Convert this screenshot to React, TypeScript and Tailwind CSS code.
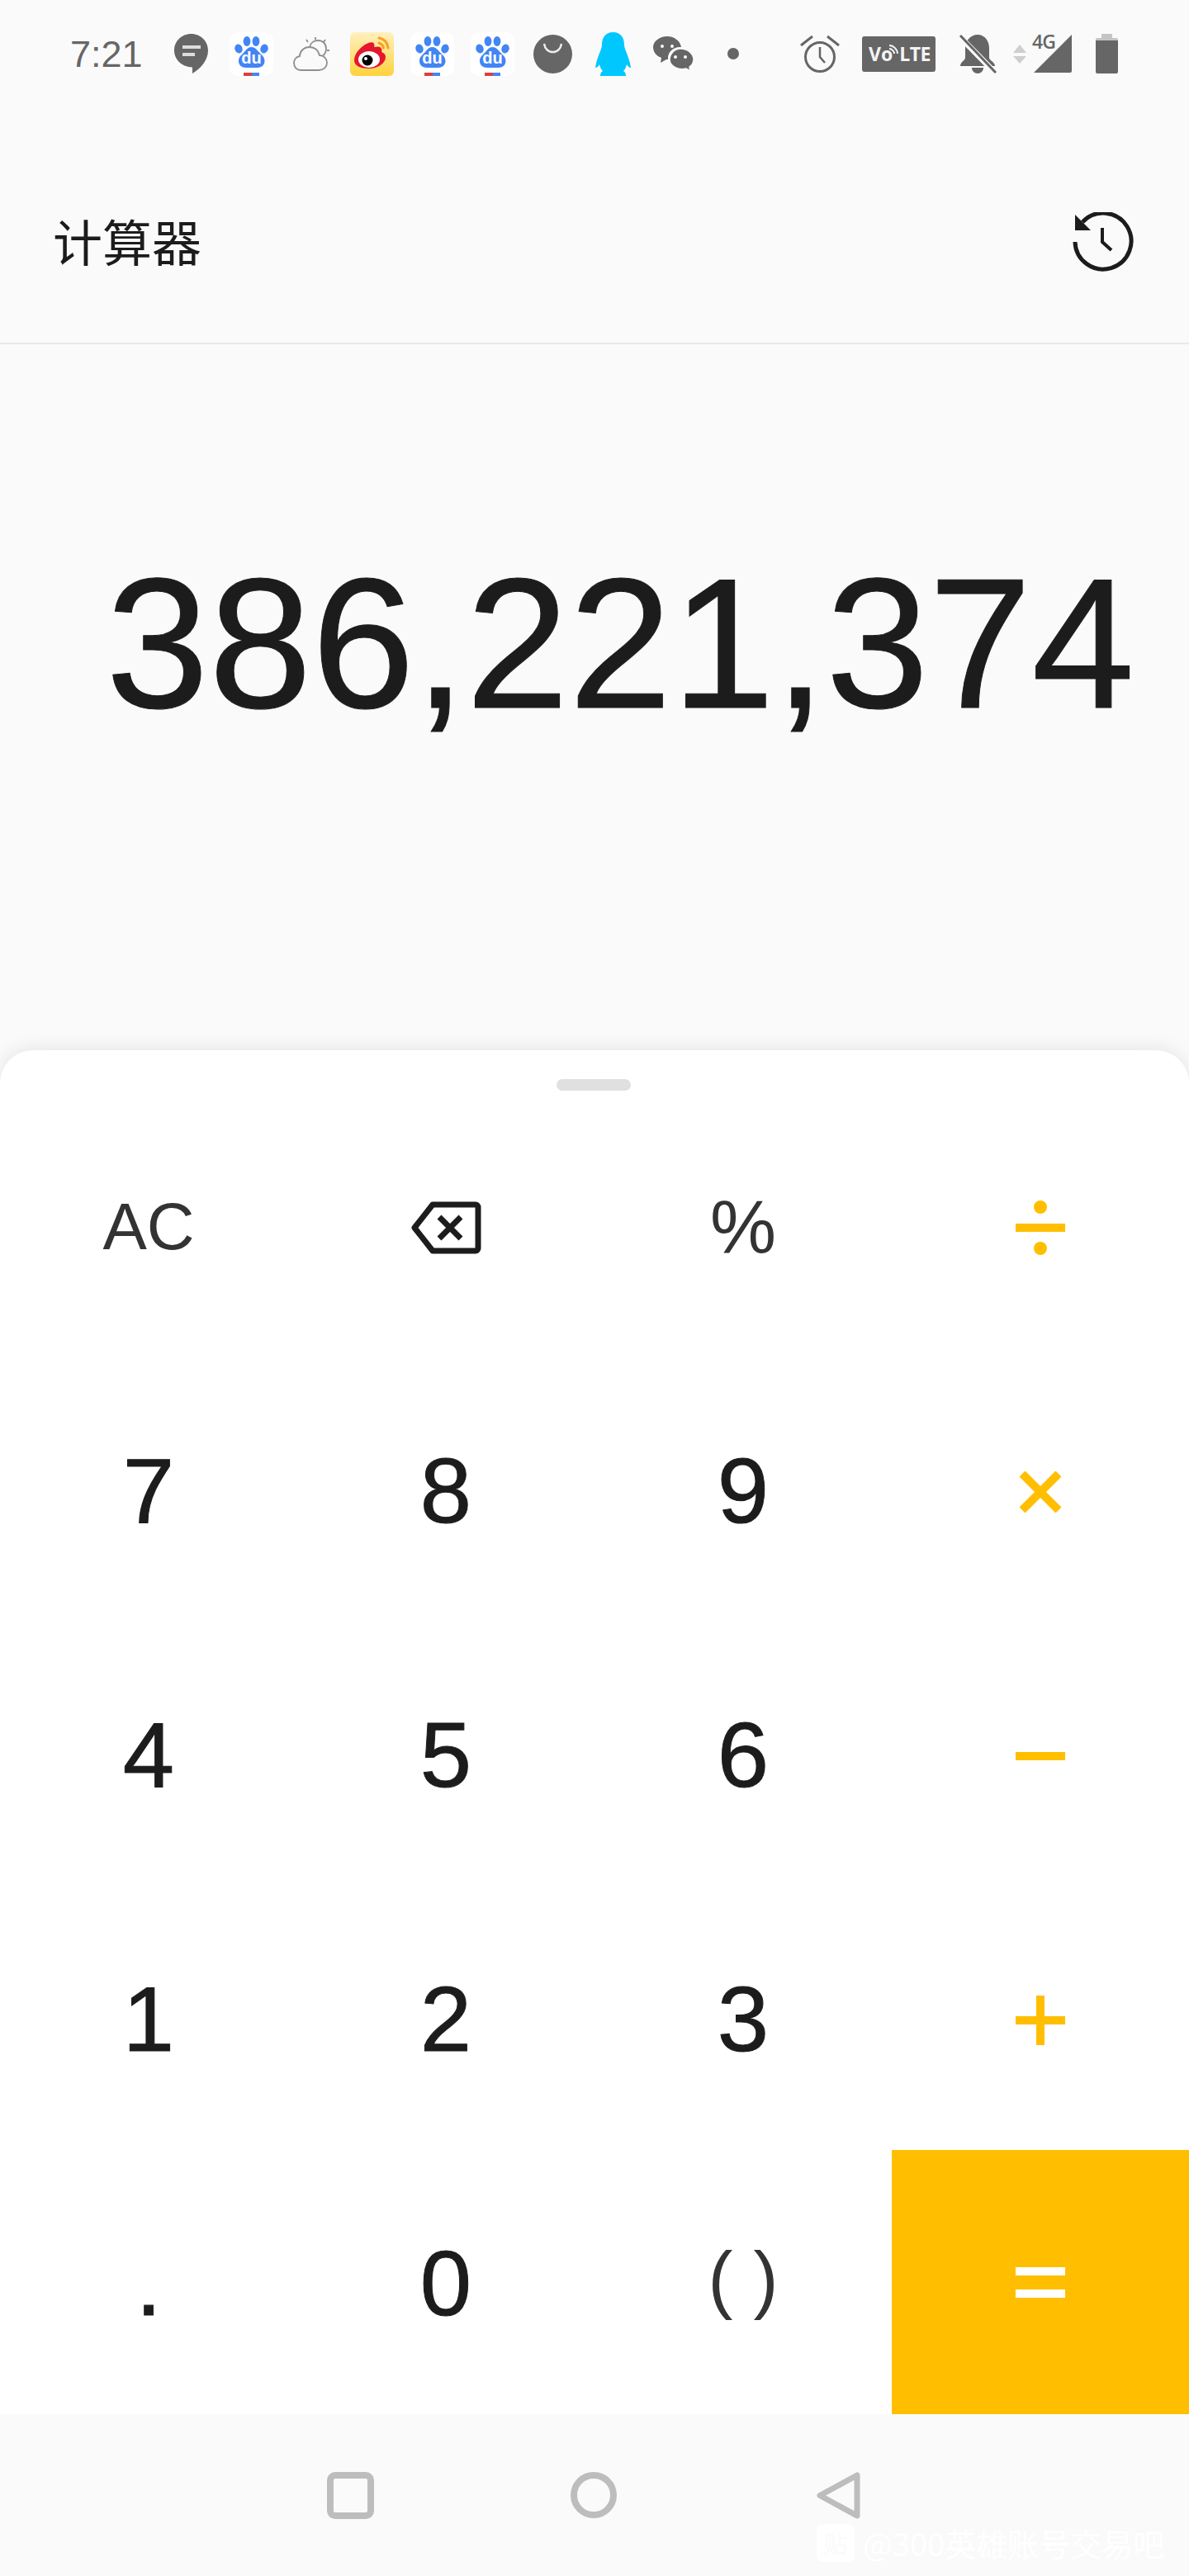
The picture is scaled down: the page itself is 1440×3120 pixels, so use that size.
const sans = "font-['Liberation_Sans',Arial,sans-serif]";

function BaiduIcon({ className }: { className: string }) {
  return (
    <svg viewBox="0 0 53 53" className={className}>
      <rect width="53" height="53" rx="10" fill="#fff" />
      <g fill="#4285f4">
        <ellipse cx="11" cy="20" rx="4.6" ry="5.6" transform="rotate(-20 11 20)" />
        <ellipse cx="21" cy="11" rx="4.4" ry="6" />
        <ellipse cx="32" cy="11" rx="4.4" ry="6" />
        <ellipse cx="42" cy="20" rx="4.6" ry="5.6" transform="rotate(20 42 20)" />
        <path d="M26.5 18c5 0 7 4 10 7 3 3 6 5 6 10 0 5-4 8-9 8H20c-5 0-9-3-9-8 0-5 3-7 6-10 3-3 4.500-7 9.500-7z" />
      </g>
      <text x="26.500" y="38" textAnchor="middle" fill="#fff" fontSize="20" fontWeight="700" fontFamily="Liberation Sans, sans-serif">du</text>
      <rect x="17" y="49" width="10" height="4" fill="#d9413d" />
      <rect x="27" y="49" width="9" height="4" fill="#4285f4" />
    </svg>
  );
}

function WeiboIcon() {
  return (
    <svg viewBox="0 0 53 53" className="ml-[24px] h-[53px] w-[53px]">
      <defs>
        <linearGradient id="wb" x1="0" y1="0" x2="0" y2="1">
          <stop offset="0" stopColor="#fff0c0" />
          <stop offset="1" stopColor="#ffd23c" />
        </linearGradient>
      </defs>
      <rect width="53" height="53" rx="6" fill="url(#wb)" />
      <path d="M5 34c0-8 7-15 13-19 5-3 10-4 11-1 1 2 0 4 0 4 4-1 8-1 9 2 1 2 0 4 0 4 3 1 5 3 5 6 0 8-10 14-20 14S5 41 5 34z" fill="#e6162d" />
      <ellipse cx="23" cy="33" rx="13" ry="10" fill="#fff" />
      <circle cx="21" cy="34" r="6.500" fill="#000" />
      <circle cx="19" cy="32" r="2" fill="#fff" />
      <path d="M35 7c6 1 10 5 11 12M35 13c3 1 5 3 5.500 6" fill="none" stroke="#f7a21c" strokeWidth="3" strokeLinecap="round" />
    </svg>
  );
}

function StatusBar() {
  return (
    <div className={`flex h-[130px] items-center pl-[85px] ${sans}`}>
      <span className="w-[90px] pt-[1px] text-[45px] leading-none text-[#666]">7:21</span>
      {/* message bubble */}
      <svg viewBox="0 0 41 48" className="ml-[36px] h-[48px] w-[41px]">
        <path d="M20.500 0C32 0 41 9 41 20c0 12-9 22-19 28v-7.500C9 40 0 31 0 20 0 9 9 0 20.500 0z" fill="#666" />
        <rect x="10" y="14" width="22" height="4" fill="#ddd" />
        <rect x="10" y="23" width="15" height="4" fill="#ddd" />
      </svg>
      <BaiduIcon className="ml-[26px] h-[53px] w-[53px]" />
      {/* weather */}
      <svg viewBox="0 0 45 41" className="ml-[24px] h-[41px] w-[45px]" fill="none" stroke="#8f8f8f" strokeWidth="1.800">
        <path d="M9 40h22c6 0 10-4 10-9 0-5-4-9-9-9-1-6-6-10-12-10-7 0-12 5-12 11-5 1-7 5-7 8 0 5 3 9 8 9z" />
        <path d="M20 12c1-5 5-8 10-8 6 0 10 4 10 10 0 4-2 7-4 9" />
        <path d="M27 0v3M16 3l2 3M39 3l-2 3M44 16h-3" />
      </svg>
      <WeiboIcon />
      <BaiduIcon className="ml-[20px] h-[53px] w-[53px]" />
      <BaiduIcon className="ml-[20px] h-[53px] w-[53px]" />
      {/* bag */}
      <svg viewBox="0 0 47 47" className="ml-[23px] h-[47px] w-[47px]">
        <circle cx="23.500" cy="23.500" r="23.500" fill="#666" />
        <path d="M13 11c1 6 5 10 10.500 10S33 17 34 11" fill="none" stroke="#eee" strokeWidth="2.500" />
      </svg>
      {/* qq */}
      <svg viewBox="0 0 43 53" className="ml-[28px] h-[53px] w-[43px]">
        <path d="M21.500 0C31 0 35 7 35 15c0 3 1 5 2 8 2 5 5 12 6 20-2 0-4-2-5-4-1 4-2 6-4 8 2 1 3 3 3 6H6c0-3 1-5 3-6-2-2-3-4-4-8-1 2-3 4-5 4 1-8 4-15 6-20 1-3 2-5 2-8C8 7 12 0 21.500 0z" fill="#00c8ff" />
      </svg>
      {/* wechat */}
      <svg viewBox="0 0 49 42" className="ml-[27px] h-[42px] w-[49px]">
        <path d="M17 0c9 0 16 6 17 13-9-1-17 6-16 15h-2l-7 4 1-6C4 24 0 19 0 13 0 6 8 0 17 0z" fill="#666" />
        <path d="M33 15c9 0 16 6 16 13 0 4-2 7-5 9l1 5-5-3c-9 3-20-3-20-11 0-7 6-13 13-13z" fill="#666" stroke="#fafafa" strokeWidth="1.500" />
        <circle cx="11" cy="12" r="2" fill="#fafafa" />
        <circle cx="23" cy="12" r="2" fill="#fafafa" />
        <circle cx="27" cy="25" r="2" fill="#fafafa" />
        <circle cx="39" cy="25" r="2" fill="#fafafa" />
      </svg>
      <span className="ml-[41px] h-[14px] w-[14px] rounded-full bg-[#666]" />
      {/* alarm */}
      <svg viewBox="0 0 48 45" className="ml-[74px] h-[45px] w-[48px]" fill="none" stroke="#666" strokeWidth="3">
        <circle cx="24" cy="26" r="17.500" />
        <path d="M24 14v12l6 7" strokeWidth="2.500" />
        <path d="M1 12 15 1M47 12 33 1" />
      </svg>
      <div className="relative ml-[27px] flex h-[43px] w-[89px] items-center rounded-[3px] bg-[#666] pl-[8px] text-[23px] leading-none font-bold text-[#f4f4f4] font-['Open_Sans',sans-serif]">
        <span>Vo</span>
        <span className="ml-[8px] tracking-[-0.5px]">LTE</span>
        <svg viewBox="0 0 12 12" className="absolute top-[10px] left-[32px] h-[12px] w-[12px]" fill="none" stroke="#f4f4f4" strokeWidth="2">
          <path d="M1 1c5 0 10 5 10 10M1 5c3 0 6 3 6 6" />
        </svg>
      </div>
      {/* muted bell */}
      <svg viewBox="0 0 46 47" className="ml-[28px] h-[47px] w-[46px]">
        <path d="M23 0c9 0 14 8 14 16v12c0 3 7 5 7 10H2c0-5 6-7 6-10V16C8 8 14 0 23 0z" fill="#666" />
        <path d="M16 40h14c0 4-3 7-7 7s-7-3-7-7z" fill="#666" />
        <path d="M1 2 44 46" stroke="#fafafa" strokeWidth="7" />
        <path d="M2 1 45 46" stroke="#666" strokeWidth="3" />
      </svg>
      <svg viewBox="0 0 16 23" className="ml-[20px] h-[23px] w-[16px]" fill="#cfcfcf">
        <path d="M8 0l8 10H0zM0 14h16L8 23z" />
      </svg>
      {/* signal */}
      <div className="relative ml-[9px] h-[46px] w-[46px]">
        <svg viewBox="0 0 46 46" className="h-[46px] w-[46px]">
          <path d="M46 0v44a2 2 0 0 1-2 2H0z" fill="#666" />
        </svg>
        <span className="absolute top-[-4px] left-[-2px] text-[23px] leading-[24px] font-semibold tracking-[-1px] text-[#666] font-['Open_Sans',sans-serif]">4G</span>
      </div>
      {/* battery */}
      <div className="ml-[29px] flex h-[48px] w-[27px] flex-col items-center">
        <div className="h-[5px] w-[13px] bg-[#c4c4c4]" />
        <div className="h-[3px] w-full rounded-t-[2px] bg-[#c4c4c4]" />
        <div className="w-full flex-1 rounded-b-[2px] bg-[#666]" />
      </div>
    </div>
  );
}

function Header() {
  return (
    <div className="flex h-[287px] items-center justify-between border-b-2 border-[#e9e9e9] pt-[36px] pr-[67px] pl-[64px]">
      <h1 className="text-[60px] leading-none font-normal text-[#1c1c1c] font-['Noto_Sans_CJK_SC',sans-serif]">计算器</h1>
      <svg viewBox="0 0 74 72" className="mt-[4px] h-[72px] w-[74px]" fill="none" stroke="#1c1c1c">
        <path d="M12 12A34 34 0 1 1 3 36" strokeWidth="5" />
        <path d="M3 3v19h19z" fill="#1c1c1c" stroke="none" />
        <path d="M36 19v17l11 10" strokeWidth="4" />
      </svg>
    </div>
  );
}

function Key({ label, small }: { label: string; small?: string }) {
  return (
    <div className={`flex items-center justify-center pt-[4px] leading-none ${small ?? "text-[112px] text-[#1c1c1c] [-webkit-text-stroke:1px_#1c1c1c]"} ${sans}`}>
      {label}
    </div>
  );
}

function Op({ children }: { children: React.ReactNode }) {
  return <div className="flex items-center justify-center pt-[5px]">{children}</div>;
}

function Keypad() {
  return (
    <div className="rounded-t-[40px] bg-white pt-[52px] shadow-[0_-4px_20px_rgba(0,0,0,0.08)]">
      <div className="relative">
        <div className="absolute top-[-17px] left-[674px] h-[14px] w-[90px] rounded-[7px] bg-[#e0e0e0]" />
      </div>
      <div className="grid grid-cols-4 auto-rows-[320px]">
        <Key label="AC" small="text-[80px] text-[#333]" />
        <Op>
          <svg viewBox="0 0 86 64" className="h-[64px] w-[86px]" fill="none" stroke="#1c1c1c">
            <path d="M27 4h52a3 3 0 0 1 3 3v50a3 3 0 0 1-3 3H27L5 32z" strokeWidth="7" strokeLinejoin="round" />
            <path d="M35 19l26 26M61 19 35 45" strokeWidth="7" />
          </svg>
        </Op>
        <Key label="%" small="text-[90px] text-[#333]" />
        <Op>
          <svg viewBox="0 0 60 66" className="h-[66px] w-[60px]" fill="#ffbf00">
            <circle cx="30" cy="8" r="8" />
            <rect x="0" y="28" width="60" height="10" />
            <circle cx="30" cy="58" r="8" />
          </svg>
        </Op>
        <Key label="7" />
        <Key label="8" />
        <Key label="9" />
        <Op>
          <svg viewBox="0 0 50 50" className="h-[50px] w-[50px]" stroke="#ffbf00" strokeWidth="10">
            <path d="M3 3l44 44M47 3 3 47" />
          </svg>
        </Op>
        <Key label="4" />
        <Key label="5" />
        <Key label="6" />
        <Op>
          <div className="h-[10px] w-[60px] bg-[#ffbf00]" />
        </Op>
        <Key label="1" />
        <Key label="2" />
        <Key label="3" />
        <Op>
          <svg viewBox="0 0 60 60" className="h-[60px] w-[60px]" fill="#ffbf00">
            <path d="M25 0h10v25h25v10H35v25H25V35H0V25h25z" />
          </svg>
        </Op>
        <Key label="." />
        <Key label="0" />
        <Key label="( )" small="text-[90px] text-[#333] pb-[12px]" />
        <div className="flex flex-col items-center justify-center gap-[17px] bg-[#ffbf00]">
          <div className="h-[10px] w-[60px] bg-white" />
          <div className="h-[10px] w-[60px] bg-white" />
        </div>
      </div>
    </div>
  );
}

function NavBar() {
  return (
    <div className="relative flex h-[196px] items-start bg-[#fafafa] pt-[70px] pl-[396px]">
      <div className="h-[57px] w-[57px] rounded-[10px] border-[8px] border-[#bdbdbd]" />
      <div className="ml-[238px] h-[56px] w-[56px] rounded-full border-[8px] border-[#bdbdbd]" />
      <svg viewBox="0 0 53 57" className="ml-[242px] h-[57px] w-[53px]" fill="none" stroke="#bdbdbd" strokeWidth="7" strokeLinejoin="round">
        <path d="M49 4v49L4 28.500z" />
      </svg>
      <div className="absolute top-[133px] left-[989px] flex items-center gap-[10px] text-[#ffffff]">
        <span className="flex h-[46px] w-[46px] items-center justify-center rounded-[8px] bg-white text-[28px] text-[#fafafa] font-['Noto_Sans_CJK_SC',sans-serif]">贴</span>
        <span className="text-[38px] leading-none whitespace-nowrap font-['Noto_Sans_CJK_SC',sans-serif]">@300英雄账号交易吧</span>
      </div>
    </div>
  );
}

export default function App() {
  return (
    <div className="flex h-[3120px] w-[1440px] flex-col overflow-hidden bg-[#fafafa]">
      <StatusBar />
      <Header />
      <div className={`flex h-[855px] items-center justify-end pr-[66px] pb-[132px] ${sans}`}>
        <span className="text-[224px] leading-none whitespace-nowrap text-[#1c1c1c] [-webkit-text-stroke:1px_#1c1c1c]">386,221,374</span>
      </div>
      <Keypad />
      <NavBar />
    </div>
  );
}
